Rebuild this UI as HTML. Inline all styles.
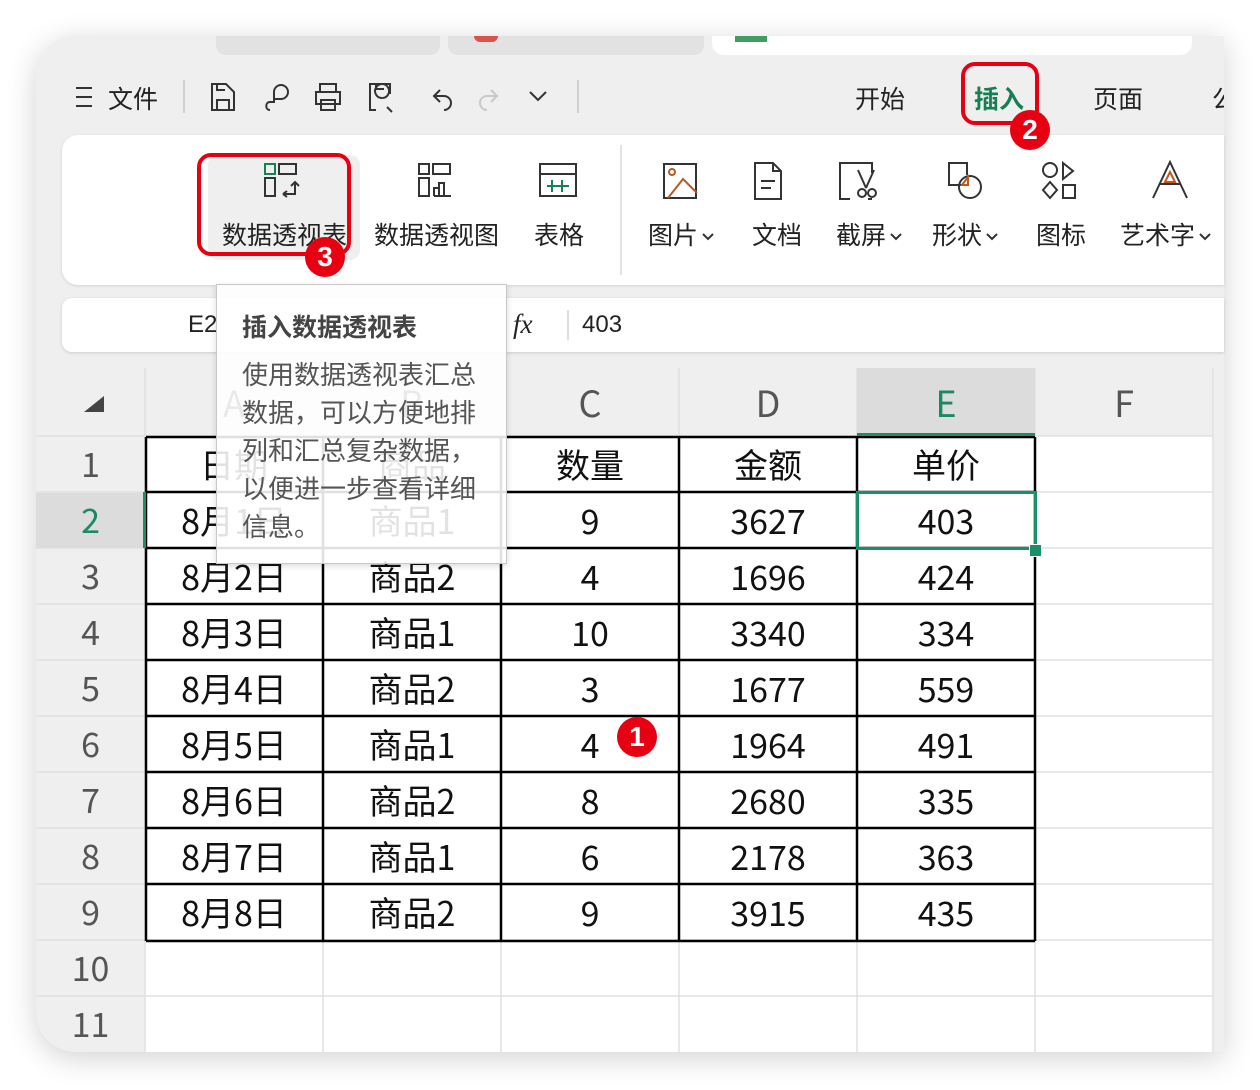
<!DOCTYPE html>
<html><head><meta charset="utf-8"><style>
*{margin:0;padding:0;box-sizing:border-box}
body{width:1260px;height:1090px;background:#fff;position:relative;overflow:hidden;font-family:"Liberation Sans","Noto Sans CJK SC",sans-serif;color:#222}
.a{position:absolute}
.win{left:36px;top:36px;width:1188px;height:1016px;background:#efefef;border-radius:40px 0 0 40px;box-shadow:0 6px 30px rgba(0,0,0,.18);overflow:hidden}
.t{font-size:25px;color:#222;white-space:nowrap}
.ic{position:absolute}
.cell{position:absolute;height:56px;display:flex;align-items:center;justify-content:center;font-size:34px;color:#111;font-family:"Noto Sans CJK SC",sans-serif}
.rh{position:absolute;left:36px;width:109px;height:56px;display:flex;align-items:center;justify-content:center;font-size:34px;color:#555;font-family:"Noto Sans CJK SC",sans-serif}
.ch{position:absolute;top:368px;height:68px;width:178px;display:flex;align-items:center;justify-content:center;font-size:36px;color:#555;font-family:"Noto Sans CJK SC",sans-serif}
.badge{position:absolute;width:40px;height:40px;border-radius:50%;background:#e60012;color:#fff;font-size:28px;font-weight:bold;display:flex;align-items:center;justify-content:center}
.dd{display:inline-block;vertical-align:middle;margin-left:4px}
</style></head><body>
<div class="a win"></div>
<!-- top tabs -->
<div class="a" style="left:216px;top:36px;width:224px;height:19px;background:#e2e2e2;border-radius:0 0 10px 10px"></div>
<div class="a" style="left:448px;top:36px;width:256px;height:19px;background:#e2e2e2;border-radius:0 0 10px 10px"></div>
<div class="a" style="left:474px;top:36px;width:24px;height:6px;background:#d9534f;border-radius:0 0 6px 6px"></div>
<div class="a" style="left:712px;top:36px;width:480px;height:19px;background:#fff;border-radius:0 0 12px 12px"></div>
<div class="a" style="left:735px;top:36px;width:32px;height:6px;background:#3e9d63"></div>
<!-- toolbar -->
<svg class="ic" style="left:74px;top:84px" width="20" height="26"><path d="M2 4h16M2 13h16M2 22h16" stroke="#333" stroke-width="2"/></svg>
<div class="a t" style="left:108px;top:80px">文件</div>
<div class="a" style="left:183px;top:80px;width:2px;height:33px;background:#d0d0d0"></div>
<svg class="ic" style="left:208px;top:78px" width="350" height="38" fill="none" stroke="#333" stroke-width="2">
<path d="M4 6h14l8 8v18H4z M9 32v-10h12v10 M9 6v6h8"/>
<path d="M62 32c-5 0-5-8 0-8h4v-10a7 7 0 1 1 7 7h-7"/>
<path d="M112 14v-8h16v8 M108 14h24v12h-24z M113 22h14v10h-14z"/>
<path d="M168 32h-6v-26h20v10 M168 6v5h8 M174 20a7 7 0 1 1 0.1 0 M179 29l5 5"/>
<path d="M232 12l-6 6 6 6 M226 18h10a7 7 0 0 1 0 14"/>
<path d="M283 12l6 6-6 6 M289 18h-10a7 7 0 0 0 0 14" stroke="#c8c8c8"/>
<path d="M322 14l8 8 8-8"/>
</svg>
<div class="a" style="left:577px;top:80px;width:2px;height:33px;background:#d0d0d0"></div>
<div class="a t" style="left:855px;top:80px">开始</div>
<div class="a t" style="left:974px;top:80px;color:#177f54;font-weight:bold">插入</div>
<div class="a t" style="left:1093px;top:80px">页面</div>
<div class="a t" style="left:1212px;top:80px;width:12px;overflow:hidden">公</div>
<!-- ribbon -->
<div class="a" style="left:62px;top:135px;width:1162px;height:150px;background:#fff;border-radius:16px 0 0 16px;box-shadow:0 1px 3px rgba(0,0,0,.12)"></div>
<div class="a" style="left:208px;top:155px;width:152px;height:105px;background:#efefef;border-radius:10px"></div>
<svg class="ic" style="left:262px;top:162px" width="350" height="40" fill="none" stroke="#333" stroke-width="2">
<rect x="3" y="2" width="10" height="10" stroke="#177f54"/><path d="M17 2h17v10h-17z M3 16h10v18h-10z M21 32h12v-12 M29 24l4-4 4 4 M21 32l4-3 M21 32l4 3"/>
<path d="M157 2h10v10h-10z M171 2h17v10h-17z M157 16h10v18h-10z M172 34v-8h5v8 M177 34v-13h5v13 M172 34h17"/>
<path d="M278 2h36v32h-36z M278 12h36" /><path d="M285 24h22 M290 18v12 M300 18v12" stroke="#177f54"/>
</svg>
<div class="a t" style="left:222px;top:216px">数据透视表</div>
<div class="a t" style="left:374px;top:216px">数据透视图</div>
<div class="a t" style="left:534px;top:216px">表格</div>
<div class="a" style="left:620px;top:145px;width:2px;height:130px;background:#e3e3e3"></div>
<svg class="ic" style="left:660px;top:160px" width="560" height="45" fill="none" stroke="#333" stroke-width="2">
<path d="M4 4h32v34h-32z"/><circle cx="12" cy="12" r="3" stroke="#c0581e"/><path d="M8 38l15-19 14 14" stroke="#c0581e"/>
<path d="M95 3h18l8 8v28h-26z M113 3v8h8 M101 21h14 M101 28h10"/>
<path d="M190 39h-10v-36h32v10 M208 39h4 M198 10l8 18 M214 10l-8 18"/><circle cx="202" cy="33" r="4"/><circle cx="212" cy="33" r="4"/>
<path d="M303 25h-14v-22h18v12"/><circle cx="310" cy="27" r="11"/><path d="M302 25l6-8v8z" stroke="#c0581e"/>
<circle cx="390" cy="10" r="7"/><path d="M403 3l10 8-10 8z M390 22l7 8-7 8-7-8z M403 25h12v13h-12z"/>
<path d="M493 38l17-36 17 36 M500 24h20"/><path d="M505 22l5-10 5 10z" stroke="#c0581e"/>
</svg>
<div class="a t" style="left:648px;top:216px">图片<svg class="dd" width="12" height="8"><path d="M1 1l5 5 5-5" fill="none" stroke="#333" stroke-width="2"/></svg></div>
<div class="a t" style="left:752px;top:216px">文档</div>
<div class="a t" style="left:836px;top:216px">截屏<svg class="dd" width="12" height="8"><path d="M1 1l5 5 5-5" fill="none" stroke="#333" stroke-width="2"/></svg></div>
<div class="a t" style="left:932px;top:216px">形状<svg class="dd" width="12" height="8"><path d="M1 1l5 5 5-5" fill="none" stroke="#333" stroke-width="2"/></svg></div>
<div class="a t" style="left:1036px;top:216px">图标</div>
<div class="a t" style="left:1120px;top:216px">艺术字<svg class="dd" width="12" height="8"><path d="M1 1l5 5 5-5" fill="none" stroke="#333" stroke-width="2"/></svg></div>
<!-- formula bar -->
<div class="a" style="left:62px;top:298px;width:1162px;height:54px;background:#fff;border-radius:10px 0 0 10px;box-shadow:0 1px 3px rgba(0,0,0,.15)"></div>
<div class="a t" style="left:188px;top:311px;font-size:24px">E2</div>
<div class="a t" style="left:513px;top:309px;font-family:'Liberation Serif',serif;font-style:italic;font-size:27px">fx</div>
<div class="a" style="left:567px;top:310px;width:2px;height:30px;background:#ddd"></div>
<div class="a t" style="left:582px;top:311px;font-size:24px">403</div>
<!-- grid area -->
<div class="a" style="left:145px;top:436px;width:1068px;height:616px;background:#fff"></div>
<svg class="ic" style="left:0;top:0" width="1260" height="1090">
<g stroke="#e0e0e0" stroke-width="1.5">
<path d="M145 368V1052M323 368V1052M501 368V1052M679 368V1052M857 368V1052M1035 368V1052M1213 368V1052"/>
<path d="M36 436H1213M36 492H1213M36 548H1213M36 604H1213M36 660H1213M36 716H1213M36 772H1213M36 828H1213M36 884H1213M36 940H1213M36 996H1213"/>
</g>
<path d="M84 412l20-16v16z" fill="#444"/>
<g stroke="#000" stroke-width="2.5">
<path d="M146 437V941M323 437V941M501 437V941M679 437V941M857 437V941M1035 437V941"/>
<path d="M146 437H1035M146 492H1035M146 548H1035M146 604H1035M146 660H1035M146 716H1035M146 772H1035M146 828H1035M146 884H1035M146 941H1035"/>
</g>
</svg>
<div class="a" style="left:857px;top:368px;width:178px;height:68px;background:#dcdcdc;border-bottom:3px solid #1a9068"></div>
<div class="a" style="left:36px;top:493px;width:109px;height:55px;background:#dcdcdc"></div>
<div class="a" style="left:143px;top:492px;width:3px;height:56px;background:#1a9068"></div>
<div class="ch" style="left:145px">A</div><div class="ch" style="left:323px">B</div><div class="ch" style="left:501px">C</div><div class="ch" style="left:679px">D</div><div class="ch" style="left:857px;color:#1a8a60">E</div><div class="ch" style="left:1035px">F</div>
<div style="position:absolute;left:0;top:-2px">
<div class="rh" style="top:436px">1</div><div class="rh" style="top:492px;color:#1a8a60">2</div><div class="rh" style="top:548px">3</div><div class="rh" style="top:604px">4</div><div class="rh" style="top:660px">5</div><div class="rh" style="top:716px">6</div><div class="rh" style="top:772px">7</div><div class="rh" style="top:828px">8</div><div class="rh" style="top:884px">9</div><div class="rh" style="top:940px">10</div><div class="rh" style="top:996px">11</div>
<div class="cell" style="left:145px;top:437px;width:178px">日期</div><div class="cell" style="left:323px;top:437px;width:178px">商品</div><div class="cell" style="left:501px;top:437px;width:178px">数量</div><div class="cell" style="left:679px;top:437px;width:178px">金额</div><div class="cell" style="left:857px;top:437px;width:178px">单价</div>
<div class="cell" style="left:145px;top:493px;width:178px">8月1日</div><div class="cell" style="left:323px;top:493px;width:178px">商品1</div><div class="cell" style="left:501px;top:493px;width:178px">9</div><div class="cell" style="left:679px;top:493px;width:178px">3627</div><div class="cell" style="left:857px;top:493px;width:178px">403</div>
<div class="cell" style="left:145px;top:549px;width:178px">8月2日</div><div class="cell" style="left:323px;top:549px;width:178px">商品2</div><div class="cell" style="left:501px;top:549px;width:178px">4</div><div class="cell" style="left:679px;top:549px;width:178px">1696</div><div class="cell" style="left:857px;top:549px;width:178px">424</div>
<div class="cell" style="left:145px;top:605px;width:178px">8月3日</div><div class="cell" style="left:323px;top:605px;width:178px">商品1</div><div class="cell" style="left:501px;top:605px;width:178px">10</div><div class="cell" style="left:679px;top:605px;width:178px">3340</div><div class="cell" style="left:857px;top:605px;width:178px">334</div>
<div class="cell" style="left:145px;top:661px;width:178px">8月4日</div><div class="cell" style="left:323px;top:661px;width:178px">商品2</div><div class="cell" style="left:501px;top:661px;width:178px">3</div><div class="cell" style="left:679px;top:661px;width:178px">1677</div><div class="cell" style="left:857px;top:661px;width:178px">559</div>
<div class="cell" style="left:145px;top:717px;width:178px">8月5日</div><div class="cell" style="left:323px;top:717px;width:178px">商品1</div><div class="cell" style="left:501px;top:717px;width:178px">4</div><div class="cell" style="left:679px;top:717px;width:178px">1964</div><div class="cell" style="left:857px;top:717px;width:178px">491</div>
<div class="cell" style="left:145px;top:773px;width:178px">8月6日</div><div class="cell" style="left:323px;top:773px;width:178px">商品2</div><div class="cell" style="left:501px;top:773px;width:178px">8</div><div class="cell" style="left:679px;top:773px;width:178px">2680</div><div class="cell" style="left:857px;top:773px;width:178px">335</div>
<div class="cell" style="left:145px;top:829px;width:178px">8月7日</div><div class="cell" style="left:323px;top:829px;width:178px">商品1</div><div class="cell" style="left:501px;top:829px;width:178px">6</div><div class="cell" style="left:679px;top:829px;width:178px">2178</div><div class="cell" style="left:857px;top:829px;width:178px">363</div>
<div class="cell" style="left:145px;top:885px;width:178px">8月8日</div><div class="cell" style="left:323px;top:885px;width:178px">商品2</div><div class="cell" style="left:501px;top:885px;width:178px">9</div><div class="cell" style="left:679px;top:885px;width:178px">3915</div><div class="cell" style="left:857px;top:885px;width:178px">435</div>
</div>
<div class="a" style="left:856px;top:491px;width:181px;height:59px;border:3px solid #1a9068"></div>
<div class="a" style="left:1029px;top:544px;width:13px;height:13px;background:#1a9068;border:1px solid #fff"></div>
<!-- tooltip -->
<div class="a" style="left:216px;top:284px;width:291px;height:280px;background:rgba(255,255,255,.88);border:1px solid #c8c8c8;box-shadow:0 2px 6px rgba(0,0,0,.15)"></div>
<div class="a" style="left:242px;top:308px;font-size:25px;font-weight:bold;color:#444;white-space:nowrap">插入数据透视表</div>
<div class="a" style="left:242px;top:356px;font-size:26px;line-height:38px;color:#555;white-space:nowrap">使用数据透视表汇总<br>数据，可以方便地排<br>列和汇总复杂数据，<br>以便进一步查看详细<br>信息。</div>
<!-- annotations -->
<div class="a" style="left:197px;top:153px;width:154px;height:103px;border:4px solid #e60012;border-radius:14px"></div>
<div class="a" style="left:961px;top:62px;width:78px;height:63px;border:4px solid #e60012;border-radius:14px"></div>
<div class="badge" style="left:305px;top:237px">3</div>
<div class="badge" style="left:1010px;top:110px">2</div>
<div class="badge" style="left:617px;top:717px">1</div>
</body></html>
